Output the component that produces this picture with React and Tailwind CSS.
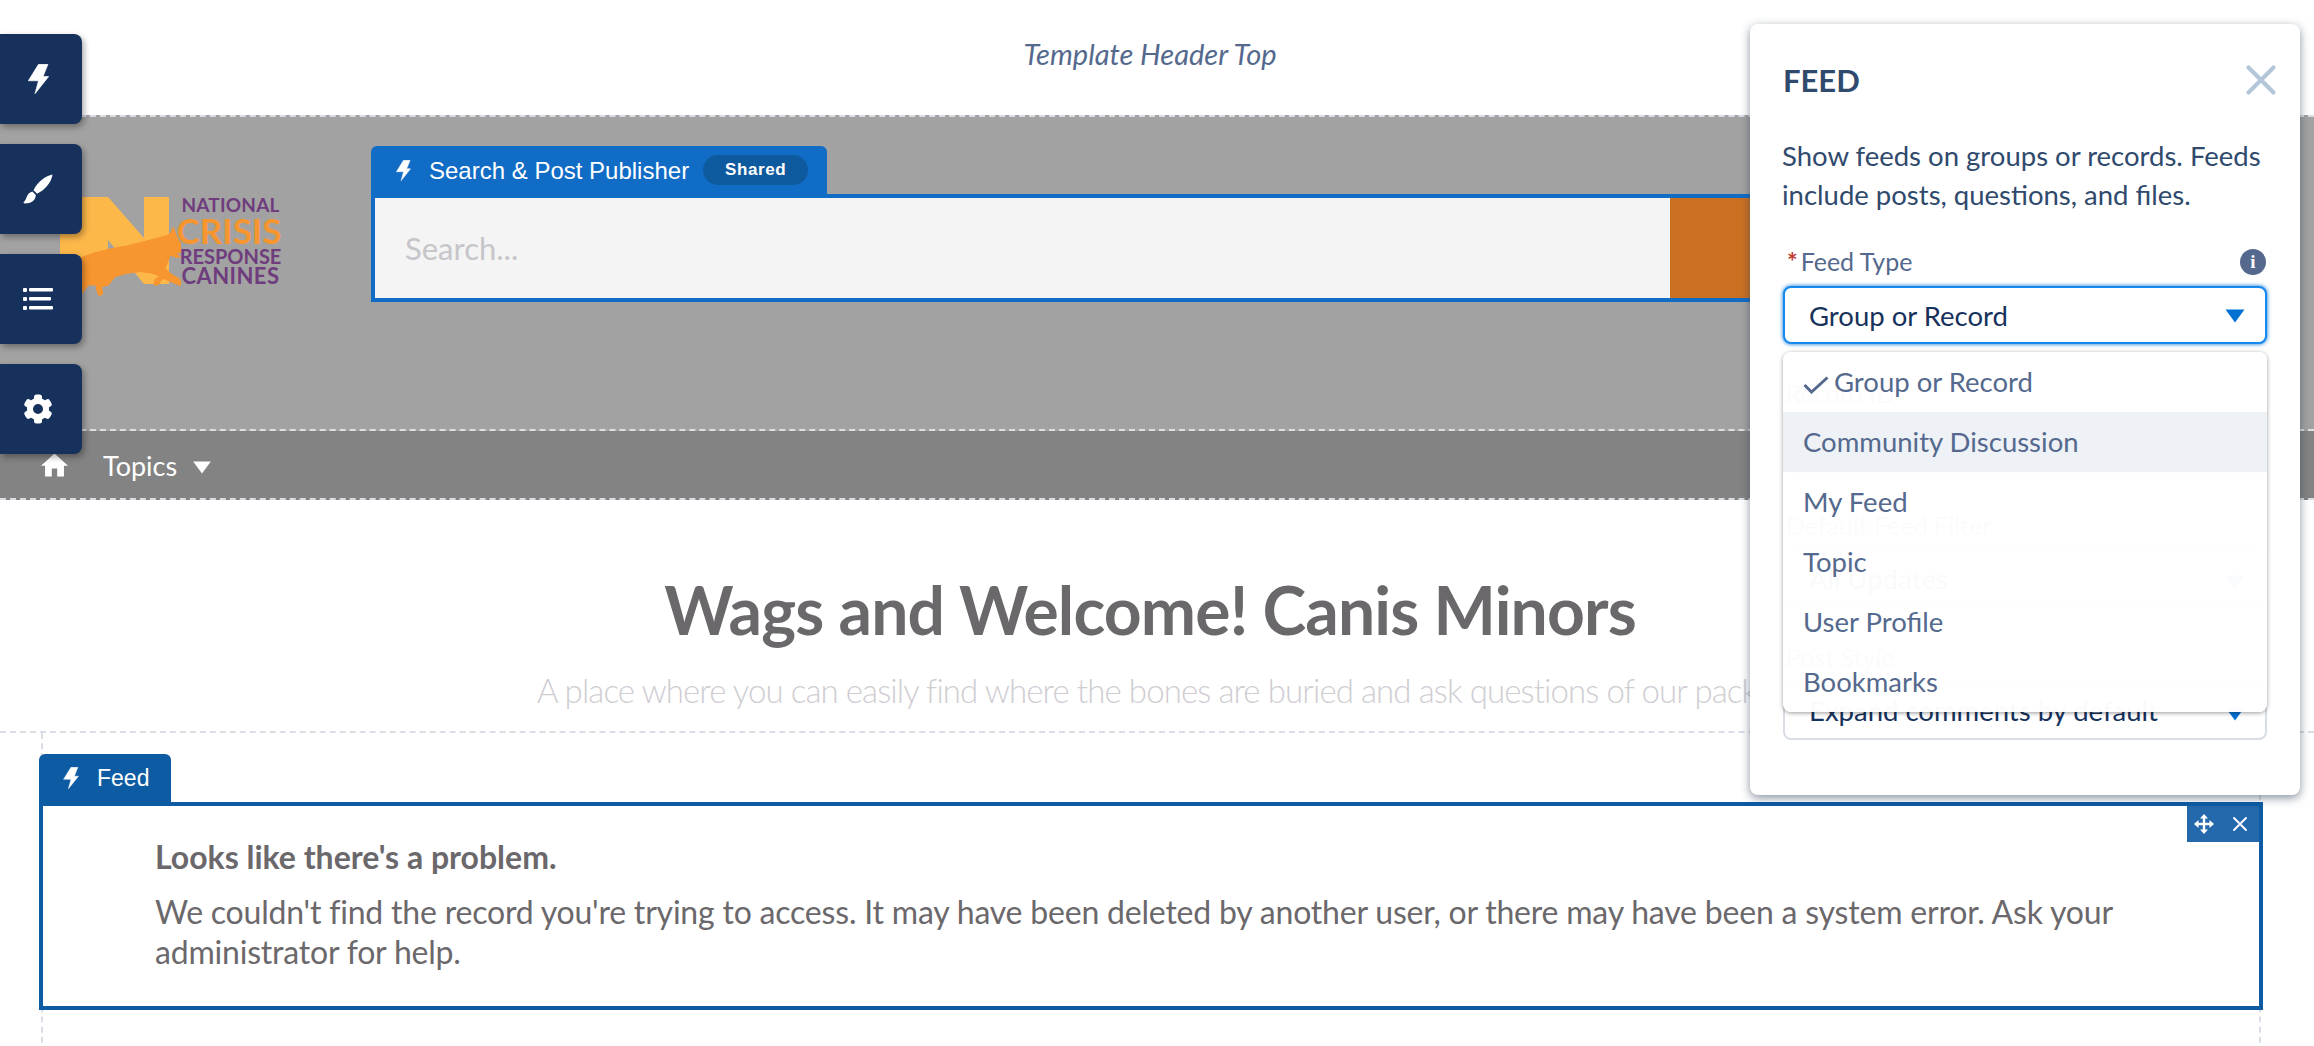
import { X } from "lucide-react";

function Bolt({ className }) {
  return (
    <svg viewBox="0 0 60 86" className={className} fill="currentColor" stroke="currentColor" strokeWidth="2" strokeLinejoin="round">
      <path d="M30 1h27L43 36h16L20 85l10-37H1z" />
    </svg>
  );
}

function Brush({ className }) {
  return (
    <svg viewBox="0 0 30 30" className={className} fill="currentColor">
      <path d="M29.500.5C23 1.500 14 8 10.500 16.200l3.600 3.500C22 16 28.500 8 29.500.5z" />
      <path d="M9.300 17.500l3.500 3.500c0 5-4.500 8.500-11 8.500-1 0-1.600-.8-1-1.500 3.500-3 2-8.500 8.500-10.500z" />
    </svg>
  );
}

function ListIcon({ className }) {
  return (
    <svg viewBox="0 0 30 22" className={className} fill="currentColor">
      <rect x="0" y="0" width="4" height="4" rx="1" />
      <rect x="6" y="0" width="24" height="3.500" rx="1" />
      <rect x="0" y="9" width="4" height="4" rx="1" />
      <rect x="6" y="9" width="22" height="3.500" rx="1" />
      <rect x="0" y="18" width="4" height="4" rx="1" />
      <rect x="6" y="18" width="24" height="3.500" rx="1" />
    </svg>
  );
}

function Gear({ className }) {
  return (
    <svg viewBox="0 0 30 30" className={className} fill="currentColor">
      <circle cx="15" cy="15" r="8" fill="none" stroke="currentColor" strokeWidth="6" />
      {[0, 60, 120, 180, 240, 300].map((a) => (
        <rect key={a} x="11" y="0.500" width="8" height="7" rx="2.500" transform={`rotate(${a} 15 15)`} />
      ))}
    </svg>
  );
}

function Caret({ className }) {
  return (
    <svg viewBox="0 0 20 14" className={className} fill="currentColor">
      <path d="M0.500 0.500h19L10 13.500z" />
    </svg>
  );
}

function Logo() {
  return (
    <div className="flex items-start">
      <svg viewBox="60 190 121 110" className="h-[110px] w-[121px] shrink-0">
        <path d="M60 197h48l36 41v-41h25v87h-25l-36-44v44H60z" fill="#fdb84a" />
        {/* running dog */}
        <path
          transform="translate(50 170) scale(0.3333)"
          d="M30 300L96 262L130 250L175 238L230 228L290 213L320 205L350 197L362 190L370 172L378 195L385 210L395 222L411 238L405 245L385 248L378 252L392 260L378 262L362 255L355 270L345 295L360 310L385 325L402 340L395 348L370 338L338 325L325 345L312 345L315 328L330 318L300 308L270 305L230 310L195 320L175 345L155 350L158 372L148 378L140 360L138 345L115 345L96 370L40 390z"
          fill="#f7952f"
          stroke="#f7952f"
          strokeWidth="3"
          strokeLinejoin="round"
        />
      </svg>
      <div className="mt-[6px] flex w-[99px] flex-col items-center font-bold leading-none text-[#6f3d7d]">
        <span className="h-[21px] text-[19px] leading-[17px] tracking-[0.2px]">NATIONAL</span>
        <span className="-ml-[3px] h-[32px] text-[35px] leading-[26px] text-[#f7952f]">CRISIS</span>
        <span className="h-[18px] text-[20px] leading-[15px]">RESPONSE</span>
        <span className="text-[22px] leading-[17px] tracking-[0.4px]">CANINES</span>
      </div>
    </div>
  );
}

function Field({ label, children }) {
  return (
    <div className="mb-[37px]">
      <div className="mb-[12px] h-[25px] pl-[3px] text-[25px] leading-[25px] text-[#54698d]">{label}</div>
      {children}
    </div>
  );
}

function SelectBox({ value }) {
  return (
    <div className="flex h-[58px] items-center justify-between rounded-lg border-2 border-[#d8dde6] bg-white pl-[24px] pr-[20px] text-[27.500px] text-[#16325c]">
      <span>{value}</span>
      <Caret className="mt-[6px] h-[14px] w-[20px] text-[#0070d2]" />
    </div>
  );
}

const feedTypes = ["Community Discussion", "My Feed", "Topic", "User Profile", "Bookmarks"];

function ToolButton({ children }) {
  return (
    <div className="flex h-[90px] w-[82px] items-center justify-center rounded-r-lg bg-[#16325c] pr-[6px] shadow-[2px_3px_6px_rgba(0,0,0,0.35)]">
      {children}
    </div>
  );
}

export default function App() {
  return (
    <div className="relative h-[1046px] w-[2314px] overflow-hidden bg-white font-['Lato',sans-serif]">
      {/* Template header */}
      <div className="flex h-[115px] justify-center pr-[14px] pt-[36px]">
        <span className="text-[29px] italic leading-[36px] text-[#54698d]">Template Header Top</span>
      </div>

      <div className="flex h-[316px] items-start border-y-2 border-dashed border-y-[#d8dde6] border-b-[#dfdfdf] bg-[#a2a2a2] pt-[29px]">
        <div className="ml-[60px] mt-[44px] w-[311px] shrink-0">
          <Logo />
        </div>
        <div className="w-[1892px] shrink-0">
          <div className="flex h-[48px] w-[456px] items-center rounded-t-md bg-[#116cc5] pl-[25px] font-['Liberation_Sans',sans-serif] text-white">
            <Bolt className="h-[21px] w-[15px]" />
            <span className="ml-[18px] mt-[2px] text-[24px]">Search &amp; Post Publisher</span>
            <span className="ml-[14px] flex h-[30px] w-[105px] items-center justify-center rounded-full bg-[#0e5a9f] text-[17px] font-bold tracking-[0.6px]">
              Shared
            </span>
          </div>
          <div className="flex h-[108px] border-4 border-[#116cc5]">
            <div className="flex flex-1 items-center bg-[#f4f4f4] pl-[30px] text-[31px] text-[#c6c5ca]">Search...</div>
            <div className="w-[589px] bg-[#cb7023]"></div>
          </div>
        </div>
      </div>

      <nav className="flex h-[69px] items-center border-b-2 border-dashed border-[#d8dde6] bg-[#838383] pl-[41px] text-white">
        <svg viewBox="2 3 20 17" className="h-[24px] w-[27px]" fill="currentColor">
          <path d="M10 20v-6h4v6h5v-8h3L12 3 2 12h3v8z" />
        </svg>
        <span className="ml-[35px] mt-[3px] text-[27px]">Topics</span>
        <Caret className="ml-[15px] mt-[6px] h-[13px] w-[20px]" />
      </nav>

      {/* Hero */}
      <div className="flex h-[231px] flex-col items-center pr-[14px] pt-[70px]">
        <h1 className="text-[66px] font-bold leading-[80px] tracking-[-0.85px] text-[#6b686c]">Wags and Welcome! Canis Minors</h1>
        <p className="mt-[20px] whitespace-nowrap text-[33px] font-light leading-[40px] tracking-[-0.9px] text-[#cfcdd2]">
          A place where you can easily find where the bones are buried and ask questions of our pack.
        </p>
      </div>

      {/* Feed region */}
      <div className="border-t-2 border-dashed border-[#d8dde6]">
        <div className="ml-[41px] h-[320px] w-[2220px] border-x-2 border-dashed border-[#d8dde6] pt-[21px]">
          <div className="-ml-[4px] w-[2224px]">
            <div className="flex h-[48px] w-[132px] items-center rounded-t-md bg-[#0d5ba3] pl-[24px] font-['Liberation_Sans',sans-serif] text-white">
              <Bolt className="h-[22px] w-[16px]" />
              <span className="ml-[18px] text-[23px]">Feed</span>
            </div>
            <div className="relative h-[208px] border-4 border-[#0d5ba3] bg-white pl-[112px] pt-[31px] text-[#6b686c]">
              <div className="absolute right-0 top-0 flex h-[36px] w-[72px] items-center justify-center gap-[14px] bg-[#2469ab] text-white">
                <svg viewBox="0 0 20 20" className="h-[20px] w-[20px]" fill="currentColor">
                  <path d="M10 0l4 4.500h-2.800v4.300h4.300V6l4.500 4-4.500 4v-2.800h-4.300v4.300H14L10 20l-4-4.500h2.800v-4.300H4.500V14L0 10l4.500-4v2.800h4.300V4.500H6z" />
                </svg>
                <X className="h-[24px] w-[24px]" strokeWidth={2} />
              </div>
              <h2 className="text-[32px] font-bold leading-[40px]">Looks like there's a problem.</h2>
              <p className="mt-[15px] w-[2000px] text-[32px] leading-[40px] tracking-[-0.2px]">
                We couldn't find the record you're trying to access. It may have been deleted by another user, or there may have been a system error. Ask your administrator for help.
              </p>
            </div>
          </div>
        </div>
      </div>

      {/* Left tool buttons */}
      <div className="absolute left-0 top-[34px] flex flex-col gap-[20px] text-white">
        <ToolButton>
          <Bolt className="h-[30px] w-[21px]" />
        </ToolButton>
        <ToolButton>
          <Brush className="h-[30px] w-[30px]" />
        </ToolButton>
        <ToolButton>
          <ListIcon className="h-[22px] w-[30px]" />
        </ToolButton>
        <ToolButton>
          <Gear className="h-[30px] w-[30px]" />
        </ToolButton>
      </div>

      {/* Property panel */}
      <div className="absolute left-[1750px] top-[24px] h-[771px] w-[550px] rounded-lg bg-white px-[33px] shadow-[0_3px_10px_rgba(40,60,80,0.55)]">
        <div className="flex h-[112px] items-center justify-between">
          <h3 className="text-[31px] font-bold text-[#2f4a6d]">FEED</h3>
          <X className="-mr-[19px] h-[50px] w-[50px] text-[#b4c6d9]" strokeWidth={2} />
        </div>
        <p className="-ml-[1px] text-[27.500px] leading-[39px] text-[#2f4a6d]">
          Show feeds on groups or records. Feeds include posts, questions, and files.
        </p>
        <div className="mt-[35px]">
          <div className="mb-[12px] flex h-[25px] items-center justify-between pl-[4px] pr-[1px] text-[25px] text-[#54698d]">
            <span>
              <span className="mr-[3px] font-bold text-[#c23934]">*</span>Feed Type
            </span>
            <span className="flex h-[26px] w-[26px] items-center justify-center rounded-full bg-[#54698d] font-['Liberation_Serif',serif] text-[19px] font-bold leading-none text-white">
              i
            </span>
          </div>
          <div className="flex h-[58px] items-center justify-between rounded-lg border-2 border-[#1589ee] bg-white pl-[24px] pr-[20px] text-[27.500px] text-[#16325c] shadow-[0_0_4px_#0070d2]">
            <span className="mt-[2px]">Group or Record</span>
            <Caret className="mt-[2px] h-[14px] w-[20px] text-[#0070d2]" />
          </div>
        </div>

        <div className="mt-[37px]">
          <Field label="Record ID">
            <div className="flex h-[58px] items-center rounded-lg border-2 border-[#d8dde6] pl-[24px] text-[27.500px] text-[#16325c]">
              {"{!recordId}"}
            </div>
          </Field>
          <Field label="Default Feed Filter">
            <SelectBox value="All Updates" />
          </Field>
          <Field label="Post Style">
            <SelectBox value="Expand comments by default" />
          </Field>
        </div>

        {/* Open dropdown */}
        <div className="absolute left-[33px] top-[328px] w-[484px] overflow-hidden rounded-lg bg-white/[0.975] text-[27.500px] text-[#54698d] shadow-[0_1px_4px_rgba(0,0,0,0.4)]">
          <div className="flex h-[60px] items-center pl-[20px]">
            <svg viewBox="0 0 26 18" className="mt-[6px] h-[18px] w-[26px]" fill="none" stroke="currentColor" strokeWidth="3">
              <path d="M1.500 9l7 7L24.500 1.500" />
            </svg>
            <span className="ml-[5px]">Group or Record</span>
          </div>
          {feedTypes.map((t, i) => (
            <div key={t} className={`flex h-[60px] items-center pl-[20px] ${i === 0 ? "bg-[#eef1f6]" : ""}`}>
              {t}
            </div>
          ))}
        </div>
      </div>
    </div>
  );
}
